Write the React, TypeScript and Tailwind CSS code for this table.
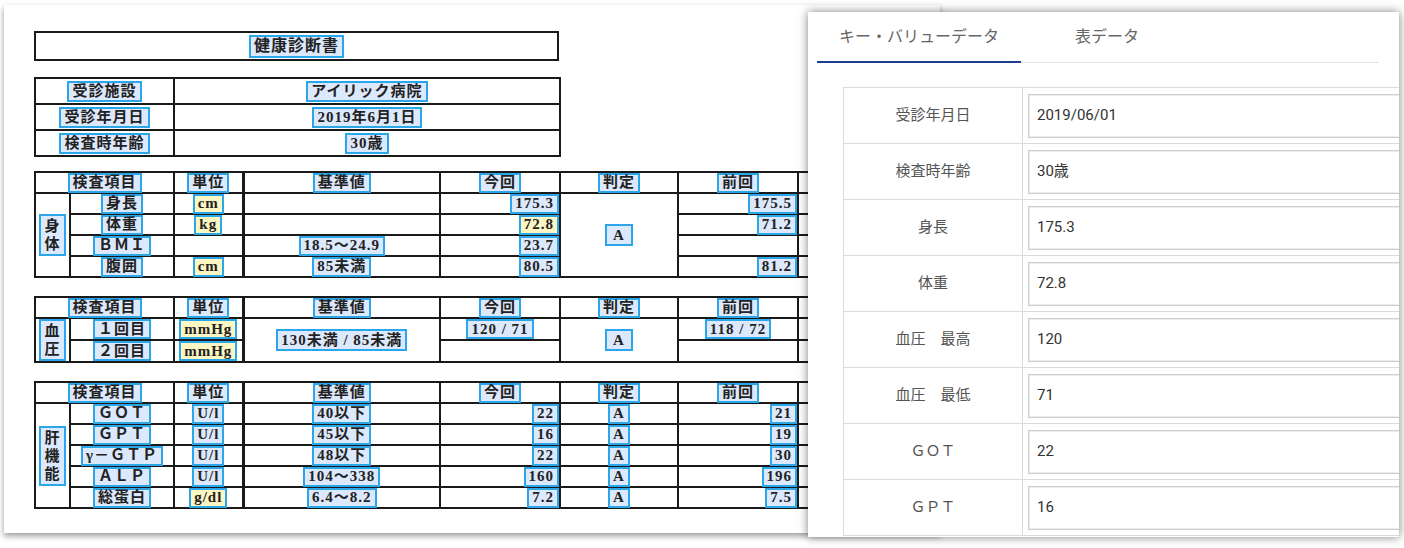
import type { ReactNode } from 'react'
import { clsx, type ClassValue } from 'clsx'
import { twMerge } from 'tailwind-merge'

const cn = (...inputs: ClassValue[]) => twMerge(clsx(inputs))

// OCR highlight box drawn over the scanned sheet
function Box({ children, yellow, className }: { children: ReactNode; yellow?: boolean; className?: string }) {
  return (
    <span
      className={cn(
        'inline-flex h-[20px] items-center border-2 border-[#2ba6e8] px-[3px] leading-none',
        yellow ? 'bg-[#fbf6c2]' : 'bg-[#dce8fb]',
        className,
      )}
    >
      {children}
    </span>
  )
}

function VBox({ chars }: { chars: string[] }) {
  return (
    <span className="inline-flex flex-col items-center border-2 border-[#2ba6e8] bg-[#dce8fb] px-[3px] py-[1px] leading-[18px]">
      {chars.map((c) => (
        <span key={c}>{c}</span>
      ))}
    </span>
  )
}

const td = 'border-2 border-[#1a1a1a] p-0 align-middle'

// one cell of the scanned sheet; content sits in a fixed-height flex box
function C({
  children,
  span,
  rows,
  right,
  mid,
  inner,
}: {
  children?: ReactNode
  span?: number
  rows?: number
  right?: boolean
  mid?: boolean
  inner?: string
}) {
  return (
    <td colSpan={span} rowSpan={rows} className={cn(td, mid && 'border-l-[3px]')}>
      <div className={cn('flex h-[19px] items-center', right ? 'justify-end' : 'justify-center', inner)}>
        {children}
      </div>
    </td>
  )
}

const cols = [35, 104, 69, 197, 120, 118, 120, 120]

function Cols() {
  return (
    <colgroup>
      {cols.map((w, i) => (
        <col key={i} style={{ width: w }} />
      ))}
    </colgroup>
  )
}

function HeadRow() {
  return (
    <tr>
      <C span={2}>
        <Box>検査項目</Box>
      </C>
      <C>
        <Box>単位</Box>
      </C>
      <C mid>
        <Box>基準値</Box>
      </C>
      <C>
        <Box>今回</Box>
      </C>
      <C>
        <Box>判定</Box>
      </C>
      <C>
        <Box>前回</Box>
      </C>
      <C />
    </tr>
  )
}

interface LiverRow {
  item: string
  unit: string
  yellow?: boolean
  ref: string
  now: string
  prev: string
}

const liver: LiverRow[] = [
  { item: 'ＧＯＴ', unit: 'U/l', ref: '40以下', now: '22', prev: '21' },
  { item: 'ＧＰＴ', unit: 'U/l', ref: '45以下', now: '16', prev: '19' },
  { item: 'γ－ＧＴＰ', unit: 'U/l', ref: '48以下', now: '22', prev: '30' },
  { item: 'ＡＬＰ', unit: 'U/l', ref: '104～338', now: '160', prev: '196' },
  { item: '総蛋白', unit: 'g/dl', yellow: true, ref: '6.4～8.2', now: '7.2', prev: '7.5' },
]

const body = [
  { item: '身長', unit: 'cm', ref: '', now: '175.3', prev: '175.5' },
  { item: '体重', unit: 'kg', ref: '', now: '72.8', nowYellow: true, prev: '71.2' },
  { item: 'ＢＭＩ', unit: '', ref: '18.5～24.9', now: '23.7', prev: '' },
  { item: '腹囲', unit: 'cm', ref: '85未満', now: '80.5', prev: '81.2' },
]

const kv = [
  ['受診年月日', '2019/06/01'],
  ['検査時年齢', '30歳'],
  ['身長', '175.3'],
  ['体重', '72.8'],
  ['血圧　最高', '120'],
  ['血圧　最低', '71'],
  ['ＧＯＴ', '22'],
  ['ＧＰＴ', '16'],
]

function Sheet() {
  return (
    <div className="absolute left-[4px] top-[5px] h-[528px] w-[936px] bg-white shadow-[0_3px_6px_rgba(0,0,0,0.4)]">
      <div className="flex flex-col pl-[30px] pt-[26px] font-['Liberation_Serif','Noto_Sans_CJK_JP',serif] text-[15px] font-bold leading-none tracking-[1px] text-[#222]">
        {/* title */}
        <table className="w-[525px] table-fixed border-collapse">
          <tbody>
            <tr>
              <C inner="h-[26px]">
                <Box className="h-[23px] text-[16px]">健康診断書</Box>
              </C>
            </tr>
          </tbody>
        </table>

        {/* facility info */}
        <table className="mt-[16px] w-[525px] table-fixed border-collapse">
          <colgroup>
            <col style={{ width: 139 }} />
            <col style={{ width: 386 }} />
          </colgroup>
          <tbody>
            {[
              ['受診施設', 'アイリック病院'],
              ['受診年月日', '2019年6月1日'],
              ['検査時年齢', '30歳'],
            ].map(([k, v]) => (
              <tr key={k}>
                <C inner="h-[24px]">
                  <Box className="h-[21px]">{k}</Box>
                </C>
                <C inner="h-[24px]">
                  <Box className="h-[21px]">{v}</Box>
                </C>
              </tr>
            ))}
          </tbody>
        </table>

        {/* body measurements */}
        <table className="mt-[14px] w-[883px] table-fixed border-collapse">
          <Cols />
          <tbody>
            <HeadRow />
            {body.map((r, i) => (
              <tr key={r.item}>
                {i === 0 && (
                  <C rows={4} inner="h-auto">
                    <VBox chars={['身', '体']} />
                  </C>
                )}
                <C>
                  <Box>{r.item}</Box>
                </C>
                <C>{r.unit && <Box yellow>{r.unit}</Box>}</C>
                <C mid>{r.ref && <Box>{r.ref}</Box>}</C>
                <C right>
                  <Box yellow={r.nowYellow}>{r.now}</Box>
                </C>
                {i === 0 && (
                  <C rows={4} inner="h-auto">
                    <Box className="h-[22px] px-[6px]">A</Box>
                  </C>
                )}
                <C right>{r.prev && <Box>{r.prev}</Box>}</C>
                <C />
              </tr>
            ))}
          </tbody>
        </table>

        {/* blood pressure */}
        <table className="mt-[18px] w-[883px] table-fixed border-collapse">
          <Cols />
          <tbody>
            <HeadRow />
            <tr>
              <C rows={2} inner="h-auto">
                <VBox chars={['血', '圧']} />
              </C>
              <C>
                <Box>１回目</Box>
              </C>
              <C>
                <Box yellow>mmHg</Box>
              </C>
              <C rows={2} mid inner="h-auto">
                <Box className="h-[22px]">130未満 / 85未満</Box>
              </C>
              <C>
                <Box>120 / 71</Box>
              </C>
              <C rows={2} inner="h-auto">
                <Box className="h-[22px] px-[6px]">A</Box>
              </C>
              <C>
                <Box>118 / 72</Box>
              </C>
              <C />
            </tr>
            <tr>
              <C>
                <Box>２回目</Box>
              </C>
              <C>
                <Box yellow>mmHg</Box>
              </C>
              <C />
              <C />
              <C />
            </tr>
          </tbody>
        </table>

        {/* liver */}
        <table className="mt-[18px] w-[883px] table-fixed border-collapse">
          <Cols />
          <tbody>
            <HeadRow />
            {liver.map((r, i) => (
              <tr key={r.item}>
                {i === 0 && (
                  <C rows={5} inner="h-auto">
                    <VBox chars={['肝', '機', '能']} />
                  </C>
                )}
                <C>
                  <Box>{r.item}</Box>
                </C>
                <C>
                  <Box yellow={r.yellow}>{r.unit}</Box>
                </C>
                <C mid>
                  <Box>{r.ref}</Box>
                </C>
                <C right>
                  <Box>{r.now}</Box>
                </C>
                <C>
                  <Box>A</Box>
                </C>
                <C right>
                  <Box>{r.prev}</Box>
                </C>
                <C />
              </tr>
            ))}
          </tbody>
        </table>
      </div>
    </div>
  )
}

function ResultPanel() {
  return (
    <div className="absolute left-[808px] top-[12px] h-[525px] w-[591px] overflow-hidden bg-white font-['Roboto','Noto_Sans_CJK_JP',sans-serif] shadow-[0_0_9px_rgba(0,0,0,0.5)]">
      <div className="ml-[9px] flex h-[51px] w-[562px] border-b border-[#e2e2e2]">
        <div className="-mb-px flex w-[204px] items-center justify-center border-b-2 border-[#1d3f8e] text-[16px] text-[#666]">
          キー・バリューデータ
        </div>
        <div className="flex w-[172px] items-center justify-center text-[16px] text-[#666]">表データ</div>
      </div>

      <table className="ml-[35px] mt-[24px] w-[600px] table-fixed border-collapse">
        <colgroup>
          <col style={{ width: 179 }} />
          <col />
        </colgroup>
        <tbody>
          {kv.map(([k, v]) => (
            <tr key={k} className="h-[56px]">
              <td className="border border-[#dadada] text-center text-[15px] text-[#555]">{k}</td>
              <td className="border border-[#dadada] px-[5px] py-[5px]">
                <div className="flex h-[44px] items-center border border-[#cfcfcf] pl-[8px] text-[15px] text-[#333] shadow-[inset_0_0_0_1px_#ececec]">
                  {v}
                </div>
              </td>
            </tr>
          ))}
        </tbody>
      </table>
    </div>
  )
}

export default function App() {
  return (
    <div className="relative h-[548px] w-[1404px] overflow-hidden bg-white">
      <Sheet />
      <ResultPanel />
    </div>
  )
}
